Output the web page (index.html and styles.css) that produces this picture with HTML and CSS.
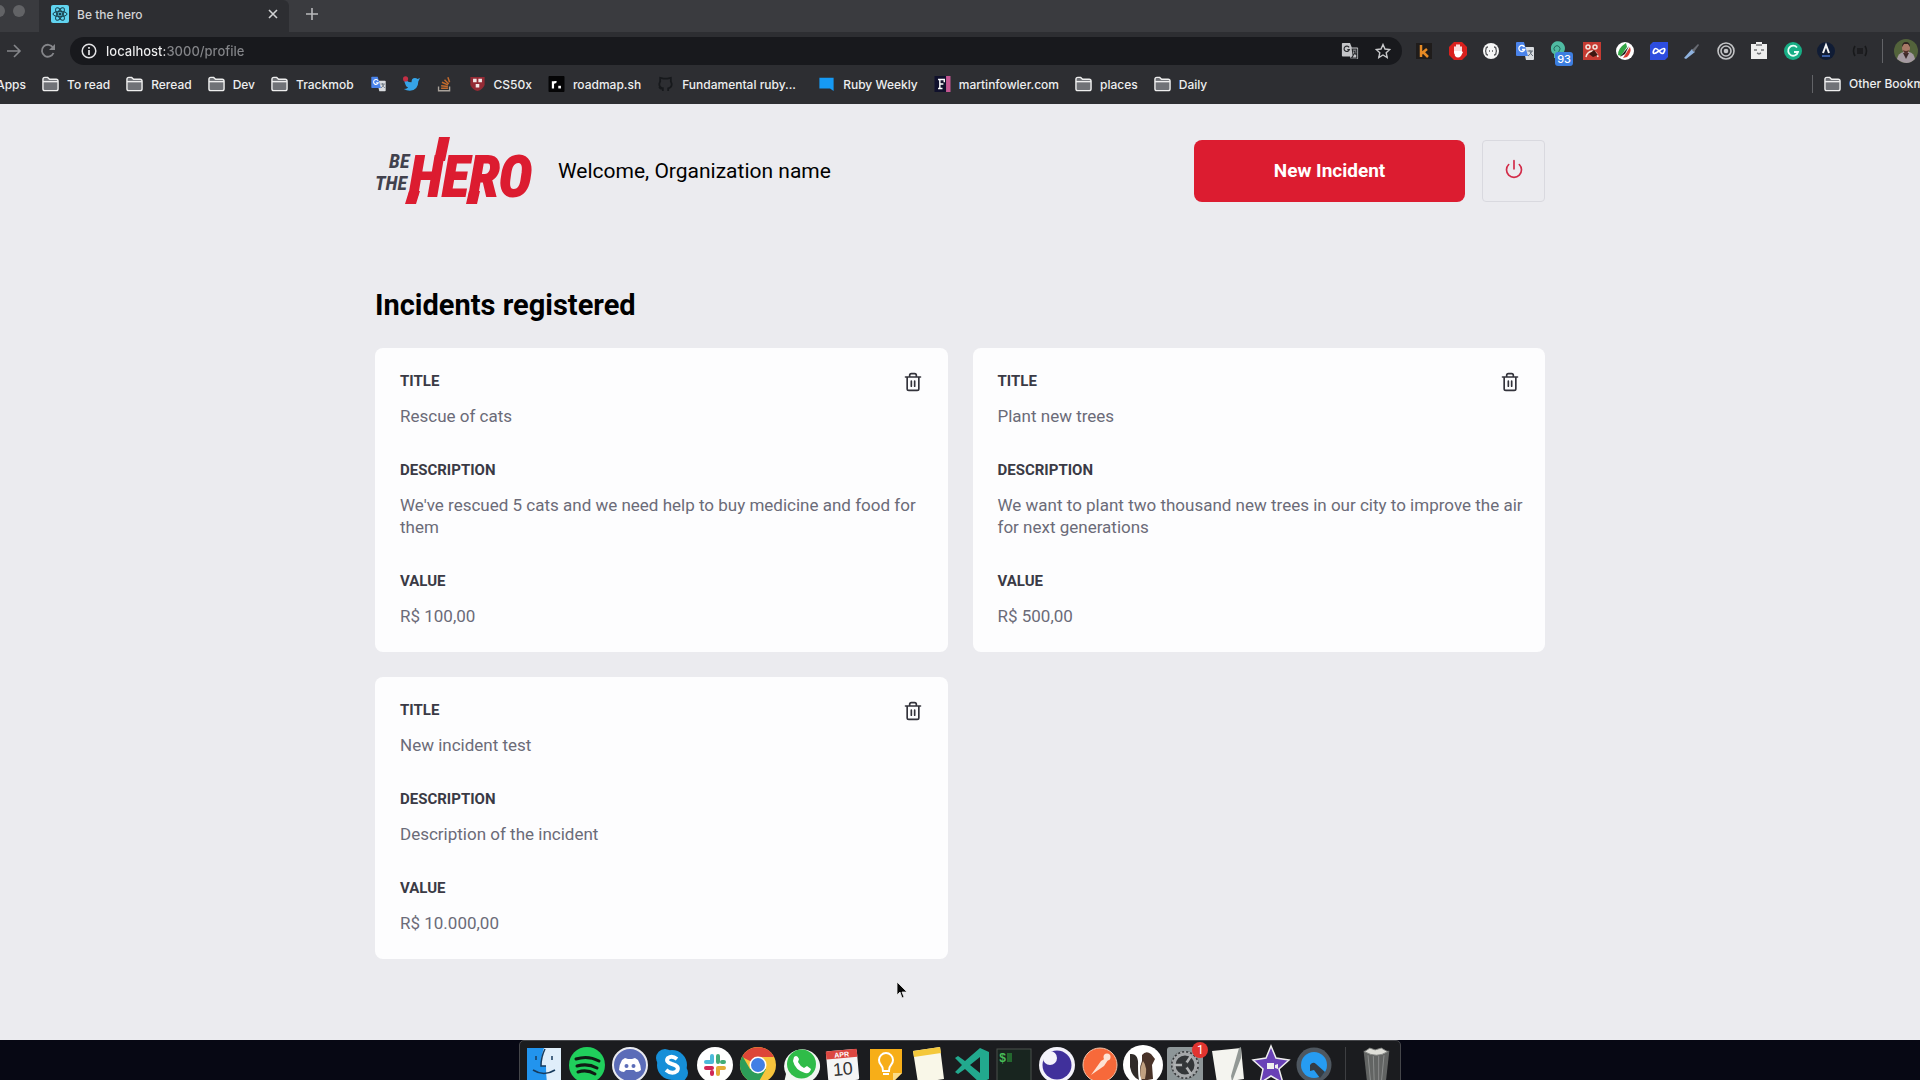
FILE: index.html
```html
<!DOCTYPE html>
<html lang="en">
<head>
<meta charset="utf-8">
<meta name="viewport" content="width=device-width, initial-scale=1">
<title>Be the hero</title>
<link rel="stylesheet" href="styles.css">
</head>
<body>
<svg class="sprite" aria-hidden="true">
  <symbol id="folder" viewBox="0 0 18 16"><path d="M1 3Q1 1 3 1H6L8 3H15Q17 3 17 5V13Q17 15 15 15H3Q1 15 1 13Z" fill="#707277" stroke="#eee" stroke-width="1.5"/><path d="M1 5.500H17" stroke="#eee" stroke-width="1.500"/></symbol>
  <symbol id="trash" viewBox="0 0 24 24"><path d="M3 6h18M19 6v14a2 2 0 0 1-2 2H7a2 2 0 0 1-2-2V6m3 0V4a2 2 0 0 1 2-2h4a2 2 0 0 1 2 2v2M10 11v6M14 11v6" fill="none" stroke="currentColor" stroke-width="2" stroke-linecap="round" stroke-linejoin="round"/></symbol>
  <symbol id="translate" viewBox="0 0 20 20"><path d="M8 6h10q1 0 1 1v11q0 1-1 1h-7z" fill="#d9dce0"/><path d="M2 1h7l4 14H2q-1 0-1-1V2q0-1 1-1z" fill="#4a83ea"/><path d="M9.500 6A3 3 0 1 0 9.700 8.500H7" fill="none" stroke="#fff" stroke-width="1.300"/><path d="M12.500 10H18M15 9v1q0 3 3 5M17 10q-1 3-4 5" fill="none" stroke="#66707c"/></symbol>
</svg>

<header class="browser">
  <div class="tabstrip">
    <div class="lights"><i></i><i></i></div>
    <div class="tab">
      <svg class="favicon" viewBox="0 0 18 18"><rect width="18" height="18" rx="2" fill="#61d4f0"/><g fill="none" stroke="#17404d"><ellipse cx="9" cy="9" rx="7" ry="2.700"/><ellipse cx="9" cy="9" rx="7" ry="2.700" transform="rotate(60 9 9)"/><ellipse cx="9" cy="9" rx="7" ry="2.700" transform="rotate(120 9 9)"/></g><circle cx="9" cy="9" r="1.500" fill="#17404d"/></svg>
      <span class="tab-title">Be the hero</span>
      <button class="plain" aria-label="Close tab"><svg width="10" height="10" viewBox="0 0 10 10"><path d="M1 1l8 8M9 1l-8 8" stroke="#d0d1d3" stroke-width="1.600"/></svg></button>
    </div>
    <button class="plain new-tab" aria-label="New tab"><svg width="14" height="14" viewBox="0 0 14 14"><path d="M7 1v12M1 7h12" stroke="#b9babc" stroke-width="1.600"/></svg></button>
  </div>
  <div class="toolbar">
    <button class="plain" aria-label="Forward"><svg width="16" height="16" viewBox="0 0 16 16"><path d="M1 8h13M8 2l6 6-6 6" fill="none" stroke="#85868a" stroke-width="1.600"/></svg></button>
    <button class="plain reload" aria-label="Reload"><svg width="16" height="16" viewBox="0 0 16 16"><path d="M13.500 10A6 6 0 1 1 13 4.500" fill="none" stroke="#85868a" stroke-width="1.800"/><path d="M15 1v6H9z" fill="#85868a"/></svg></button>
    <div class="omnibox">
      <svg width="16" height="16" viewBox="0 0 16 16"><circle cx="8" cy="8" r="6.800" fill="none" stroke="#e4e4e6" stroke-width="1.500"/><path d="M8 7v5M8 4v1.700" stroke="#e4e4e6" stroke-width="1.700"/></svg>
      <input class="address" type="text" aria-label="Address" value="localhost:3000/profile">
      <svg width="18" height="18" viewBox="0 0 20 20"><path d="M2 1h8l2 5h6q1 0 1 1v11q0 1-1 1h-7l-1-3H2q-1 0-1-1V2q0-1 1-1z" fill="#c4c5c8"/><path d="M9 6A3 3 0 1 0 9.300 8.500H7M12.500 8h5v10h-6l2-3zM13 10h4M15 10q0 3 2 4M16 11q-1 3-3 4" fill="none" stroke="#292b2e" stroke-width="1.300"/></svg>
      <svg width="16" height="16" viewBox="0 0 16 16"><path d="M8 1.500l2 4.500 4.800.5-3.600 3.200 1 4.800L8 12l-4.200 2.500 1-4.800L1.200 6.500 6 6z" fill="none" stroke="#c9cacc" stroke-width="1.400"/></svg>
    </div>
    <div class="extensions">
      <svg viewBox="0 0 20 20"><path d="M2 2h16v16H2z" fill="#1f1c1b"/><path d="M7 4v12M13 8l-6 5M9.500 11.500L14 16" stroke="#e78b25" stroke-width="2.500"/></svg>
      <svg viewBox="0 0 20 20"><path d="M6 1h8l5 5v8l-5 5H6l-5-5V6z" fill="#d9201d"/><path d="M7 6v6M9 4v7M11 4v7M13 6v6" stroke="#fff" stroke-width="1.700" stroke-linecap="round"/><path d="M6 10l1 5q3 3 6 0l2-4-2-1z" fill="#fff"/></svg>
      <svg viewBox="0 0 20 20"><circle cx="10" cy="10" r="8" fill="#f6f6f6"/><path d="M7 6q-2 0-2 2t-1 2q1 0 1 2t2 2M13 6q2 0 2 2t1 2q-1 0-1 2t-2 2M8 10h1M11 10h1" fill="none" stroke="#55565a" stroke-width="1.300"/></svg>
      <svg viewBox="0 0 20 20"><use href="#translate"/></svg>
      <span class="ext-badged"><svg viewBox="0 0 20 20"><path d="M3 8a7 7 0 1 1 12 4l-5 1v4H6v-4Q3 12 3 8z" fill="#4fbba2"/><path d="M7 10a3 3 0 1 1 4 0l-1 3" fill="none" stroke="#23695c"/></svg><b class="count">93</b></span>
      <svg viewBox="0 0 20 20"><rect x="1" y="1" width="18" height="18" fill="#c53b32"/><path d="M4 6a2 2 0 1 1 4 0 2 2 0 1 1-4 0M11 6a2 2 0 1 1 4 0 2 2 0 1 1-4 0M4 16q1-5 6-6 5 1 6 6" fill="none" stroke="#f3e5dc" stroke-width="1.500"/><path d="M7 13l5-4 4 5-5 2z" fill="#3d1711"/></svg>
      <svg viewBox="0 0 20 20"><circle cx="10" cy="10" r="9" fill="#fff"/><path d="M3 14Q3 7 11 2l1 4-6 9z" fill="#32a545"/><path d="M8 17l7-11q2 5-3 10z" fill="#d63a32"/><path d="M5 16L14 5l-4 8z" fill="#1b1b1c"/></svg>
      <svg viewBox="0 0 20 20"><path d="M4 1h15v15l-3 3H1V4z" fill="#2d4ddf"/><path d="M10 10Q6 5 4.500 10T10 10Q14 15 15.500 10T10 10" fill="none" stroke="#fff" stroke-width="1.700"/></svg>
      <svg viewBox="0 0 20 20"><path d="M2 17l8-9 3 3-9 7z" fill="#8fb2de"/><path d="M10 9l6-6 1 1-5 7z" fill="#686b72"/></svg>
      <svg viewBox="0 0 20 20"><g fill="none" stroke="#c3c4c6" stroke-width="1.600"><circle cx="10" cy="10" r="8"/><circle cx="10" cy="10" r="5"/></g><circle cx="10" cy="10" r="2.300" fill="#c3c4c6"/></svg>
      <svg viewBox="0 0 20 20"><path d="M2 3h5V1h6v2h5v15H2z" fill="#eee"/><path d="M7 4h6M5 9h3M12 9h3M8 12l2 1 2-1" fill="none" stroke="#747578" stroke-width="1.400"/></svg>
      <svg viewBox="0 0 20 20"><circle cx="10" cy="10" r="9" fill="#17ae85"/><path d="M14 6.500A5 5 0 1 0 15 11h-4" fill="none" stroke="#e9fff8" stroke-width="1.800"/></svg>
      <svg viewBox="0 0 20 20"><circle cx="10" cy="10" r="9" fill="#101c35"/><path d="M7 12l3-8 3 8" fill="none" stroke="#f5f5f5" stroke-width="2"/><path d="M6 15h8" stroke="#4772c9" stroke-width="1.500"/></svg>
      <svg viewBox="0 0 20 20"><path d="M5 5q-3 5 0 10M15 5q3 5 0 10M7 8h6M7 10h6M7 12h6" fill="none" stroke="#18191b" stroke-width="1.600"/></svg>
    </div>
    <svg class="avatar" viewBox="0 0 24 24"><circle cx="12" cy="12" r="12" fill="#53633b"/><path d="M3 20q1-6 7-7h5q5 1 6 7-8 8-18 0z" fill="#a59aa1"/><path d="M9 14l3 6 3-6z" fill="#3c2929"/><ellipse cx="12" cy="9" rx="4" ry="5" fill="#a87967"/><path d="M8 8q0-5 4-5t4 5l-2-3h-4z" fill="#302321"/><path d="M9 11q3 2 6 0l-2 4h-2z" fill="#4f302b"/></svg>
  </div>
  <nav class="bookmarks" aria-label="Bookmarks">
    <a class="apps" href="#">Apps</a>
    <a href="#"><svg><use href="#folder"/></svg>To read</a>
    <a href="#"><svg><use href="#folder"/></svg>Reread</a>
    <a href="#"><svg><use href="#folder"/></svg>Dev</a>
    <a href="#"><svg><use href="#folder"/></svg>Trackmob</a>
    <a href="#" aria-label="Translate"><svg><use href="#translate"/></svg></a>
    <a href="#" aria-label="Twitter"><svg viewBox="0 0 20 18"><path d="M2 3q4 4 8 4 0-5 4-5 2 0 3 1l3-1-2 4q0 10-10 11-4 0-7-2 3 0 5-2-3-1-3-3-2-3-1-7z" fill="#35a4e8"/><circle cx="3" cy="3" r="3" fill="#c42f45"/></svg></a>
    <a href="#" aria-label="Stack Overflow"><svg viewBox="0 0 20 18"><path d="M3 12v5h13v-5" fill="none" stroke="#a9a29b" stroke-width="1.600"/><path d="M6 14h8M6 11l8 1M7 7l7 3M10 4l5 5M14 1l2 6" stroke="#c36a2d" stroke-width="1.800"/></svg></a>
    <a href="#"><svg viewBox="0 0 18 18"><path d="M1 1h16v9q-2 5-8 7-6-2-8-7z" fill="#942b35"/><path d="M4 3h4v4H4zM10 3h4v4h-4zM7 9h4v4H7z" fill="#f2e9e9"/></svg>CS50x</a>
    <a href="#"><svg viewBox="0 0 18 18"><rect width="18" height="18" rx="1" fill="#050506"/><path d="M5 14V6M5 9q1-3 4-2" fill="none" stroke="#fff" stroke-width="2.500"/><path d="M11 11h3v3h-3z" fill="#fff"/></svg>roadmap.sh</a>
    <a class="wide" href="#"><svg viewBox="0 0 18 18"><path d="M6 17v-3q-3 1-4-2M6 14q-4-1-4-5l1-3V2l4 1h4l4-1v4l1 3q0 4-4 5v3" fill="none" stroke="#17191c" stroke-width="2"/></svg>Fundamental ruby...</a>
    <a href="#"><svg viewBox="0 0 18 18"><path d="M1 2h16v15l-4-3H1z" fill="#169af4"/></svg>Ruby Weekly</a>
    <a href="#"><svg viewBox="0 0 18 18"><path d="M0 0h13v18H0z" fill="#10112c"/><path d="M13 0h5v18h-5z" fill="#c45792"/><path d="M4 4h7v3M6 4v10M4 14h5M6 9h4" fill="none" stroke="#fff" stroke-width="1.600"/></svg>martinfowler.com</a>
    <a href="#"><svg><use href="#folder"/></svg>places</a>
    <a href="#"><svg><use href="#folder"/></svg>Daily</a>
    <a class="other" href="#"><svg><use href="#folder"/></svg>Other Bookmarks</a>
  </nav>
</header>

<main class="page">
  <div class="container">
    <header class="profile-header">
      <svg class="logo" viewBox="0 0 158 67" role="img" aria-label="Be the hero">
        <path class="slash" d="M59 24l5-24h11l-5 24zM34 54l-4 13h11l4-13zM94 54l-3 13h11l3-13z"/>
        <text class="logo-dark" x="14" y="31">BE</text>
        <text class="logo-dark" x="0" y="53">THE</text>
        <text class="logo-red" x="34" y="59">HERO</text>
      </svg>
      <p class="welcome">Welcome, Organization name</p>
      <button class="new-incident">New Incident</button>
      <button class="logout" aria-label="Log out"><svg width="20" height="20" viewBox="0 0 24 24"><path d="M18.360 6.640a9 9 0 1 1-12.730 0M12 2v10" fill="none" stroke="currentColor" stroke-width="2" stroke-linecap="round"/></svg></button>
    </header>
    <h1>Incidents registered</h1>
    <ul class="incidents">
      <li class="card">
        <button class="delete" aria-label="Delete incident"><svg><use href="#trash"/></svg></button>
        <h2>TITLE</h2><p>Rescue of cats</p>
        <h2>DESCRIPTION</h2><p>We've rescued 5 cats and we need help to buy medicine and food for them</p>
        <h2>VALUE</h2><p>R$ 100,00</p>
      </li>
      <li class="card">
        <button class="delete" aria-label="Delete incident"><svg><use href="#trash"/></svg></button>
        <h2>TITLE</h2><p>Plant new trees</p>
        <h2>DESCRIPTION</h2><p>We want to plant two thousand new trees in our city to improve the air for next generations</p>
        <h2>VALUE</h2><p>R$ 500,00</p>
      </li>
      <li class="card">
        <button class="delete" aria-label="Delete incident"><svg><use href="#trash"/></svg></button>
        <h2>TITLE</h2><p>New incident test</p>
        <h2>DESCRIPTION</h2><p>Description of the incident</p>
        <h2>VALUE</h2><p>R$ 10.000,00</p>
      </li>
    </ul>
  </div>
</main>

<footer class="desktop">
  <div class="dock">
    <div class="dock-apps">
      <svg viewBox="0 0 36 36"><rect x="1" y="1" width="34" height="34" fill="#dfeefa"/><path d="M1 1h17q-3 8-3 18h5q0 10 1 16H1z" fill="#2294ee"/><path d="M10 9v4M26 9v4M7 23q11 7 22 0M19 2q-4 8-4 17h5" fill="none" stroke="#173b5d" stroke-width="1.500"/></svg>
      <svg viewBox="0 0 36 36"><circle cx="18" cy="18" r="18" fill="#20cf5c"/><path d="M7 12q12-4 23 2M8 19q11-3 20 2M9 25q9-3 17 2" fill="none" stroke="#101b14" stroke-width="3" stroke-linecap="round"/></svg>
      <svg viewBox="0 0 36 36"><circle cx="18" cy="18" r="17" fill="#5b6cb8" stroke="#e8e9ef" stroke-width="2"/><path d="M13 11l3 1h4l3-1 3 2q3 5 3 10-2 2-5 2l-2-2h-8l-2 2q-3 0-5-2 0-5 3-10z" fill="#fff"/><circle cx="14.500" cy="19" r="2" fill="#5b6cb8"/><circle cx="21.500" cy="19" r="2" fill="#5b6cb8"/></svg>
      <svg viewBox="0 0 36 36"><circle cx="11" cy="11" r="9" fill="#168fd8"/><circle cx="25" cy="26" r="9" fill="#168fd8"/><circle cx="18" cy="18" r="15" fill="#168fd8"/><path d="M23 12q-5-4-9-1-3 4 4 6 8 2 5 7-5 4-11-1" fill="none" stroke="#fff" stroke-width="4"/></svg>
      <svg viewBox="0 0 36 36"><circle cx="18" cy="18" r="18" fill="#fff"/><g stroke-width="4" stroke-linecap="round"><path d="M15 9v6M9 15h6" stroke="#4bbada"/><path d="M21 9v6M27 15h-2" stroke="#42ad78"/><path d="M9 21h6M15 27v-2" stroke="#cf2856"/><path d="M21 21h6M21 21v6" stroke="#e3ad37"/></g></svg>
      <svg viewBox="0 0 36 36"><circle cx="18" cy="18" r="18" fill="#f7c43c"/><path d="M18 18L2 10A18 18 0 0 1 34 10H18z" fill="#dd4638"/><path d="M2.400 9A18 18 0 0 0 18 36l8-14-16 0z" fill="#2c9d58"/><circle cx="18" cy="18" r="8.500" fill="#fff"/><circle cx="18" cy="18" r="7" fill="#417fe5"/></svg>
      <svg viewBox="0 0 36 36"><path d="M1 36l2-9A18 17 0 1 1 10 34z" fill="#f1f6f1"/><circle cx="18.500" cy="17" r="14.500" fill="#2fbc48"/><path d="M11 10q3-3 5 2l-1 3q2 4 6 6l3-2 4 3q-1 5-6 4-10-3-12-12z" fill="#fff"/></svg>
      <svg viewBox="0 0 36 36"><g transform="rotate(-5 18 18)"><rect x="2" y="3" width="31" height="31" rx="2" fill="#f5f5f5"/><path d="M2 3h31v8H2z" fill="#dc4741"/><text class="cal-month" x="17.500" y="10">APR</text><text class="cal-day" x="17.500" y="28">10</text></g></svg>
      <svg viewBox="0 0 36 36"><path d="M2 2h32v24l-9 9H2z" fill="#f7ae18"/><path d="M34 26l-9 9v-9z" fill="#fbdc88"/><path d="M15 24q0-4-2-6a7 7 0 1 1 10 0q-2 2-2 6zM15 27h6" fill="none" stroke="#fff" stroke-width="2"/></svg>
      <svg viewBox="0 0 36 36"><path d="M2 4l27-4 4 32-26 4z" fill="#f9f7e8"/><path d="M2 4l27-4 1 6-27 4z" fill="#f4c83b"/></svg>
      <svg viewBox="0 0 36 36"><path d="M26 1l9 4v27l-9 4-15-14-7 5-3-2 7-7-7-7 3-2 7 5zM26 10l-10 8 10 8z" fill="#22a98e" fill-rule="evenodd"/></svg>
      <svg viewBox="0 0 36 36"><rect x="1" y="2" width="34" height="33" fill="#18251f" stroke="#4a504c"/><text class="term" x="3" y="15">$</text><path d="M11 6h5v9h-5z" fill="#23682e"/></svg>
      <svg viewBox="0 0 36 36"><circle cx="18" cy="18" r="18" fill="#f3f2fa"/><circle cx="18" cy="18" r="14.500" fill="#40309b"/><circle cx="11" cy="11" r="7" fill="#f3f2fa"/></svg>
      <svg viewBox="0 0 36 36"><circle cx="18" cy="18" r="17" fill="#f7693a" stroke="#f4c2a8"/><path d="M9 28l10-14 5-3 2 2-4 6z" fill="#fde3d3"/><circle cx="25" cy="10" r="3.500" fill="#fde3d3"/></svg>
      <svg viewBox="0 0 36 36"><circle cx="18" cy="18" r="20" fill="#fff"/><path d="M5 7q9-1 8 12 0 9 1 14-7-3-9-13z" fill="#302b29"/><path d="M17 8q4-5 9-1l4 5-3 6 1 14-11 2q-4-11 0-20z" fill="#493329"/><path d="M18 14q5 6 2 18h-4q-2-10 2-18z" fill="#c0a081"/></svg>
      <span class="badged"><svg viewBox="0 0 36 36"><rect width="36" height="36" rx="3" fill="#8d9698"/><circle cx="18" cy="18" r="14" fill="#333638"/><circle cx="18" cy="18" r="11" fill="none" stroke="#a5a8aa" stroke-width="3"/><circle cx="18" cy="18" r="13" fill="none" stroke="#a5a8aa" stroke-width="2" stroke-dasharray="2 2"/><path d="M18 18H7M18 18l6-9M18 18l6 9" stroke="#b2b4b5" stroke-width="2.500"/><circle cx="18" cy="18" r="3" fill="#333638"/></svg><b class="alert">1</b></span>
      <svg viewBox="0 0 36 36"><path d="M2 4l29-3 3 31-27 4z" fill="#f4f4ef"/><path d="M31 0l-2 1-8 28 1 6 9-24z" fill="#929895"/></svg>
      <svg viewBox="0 0 36 36"><path d="M18-1l5 12 13 2-10 9 4 14-12-7-11 7 3-14-10-9 13-2z" fill="#6941b7" stroke="#eee" stroke-width="1.500"/><path d="M14 16h7v6h-7zM22 18l3-1v5l-3-1z" fill="#eee"/></svg>
      <svg viewBox="0 0 36 36"><circle cx="18" cy="18" r="17.500" fill="#4e5760"/><circle cx="18" cy="18" r="13" fill="#269cf2"/><path d="M14 18q3-4 6-1l9 8-5 6-6-8-4 1z" fill="#353c43"/></svg>
    </div>
    <svg class="bin" viewBox="0 0 36 40"><path d="M4 4h29l-4 36H8z" fill="#626463"/><path d="M9 9l3 31M15 10l1 30M21 10v30M27 9l-3 31" stroke="#8f9190"/><path d="M5 5l6-4 6 2 7-2 7 4q-12 8-26 0z" fill="#deded8" stroke="#80827f"/></svg>
  </div>
</footer>
<svg class="cursor" viewBox="0 0 12 18" aria-hidden="true"><path d="M1 1v13l3-3 2 6 2-1-2-5h5z" fill="#050505" stroke="#eee" stroke-width=".8"/></svg>
</body>
</html>
```
FILE: styles.css
```css
* { box-sizing: border-box; margin: 0; padding: 0; }
body { min-height: 100vh; display: flex; flex-direction: column; overflow-x: hidden; background: #ebebef; font-family: Roboto, "Liberation Sans", sans-serif; }
button { border: 0; background: none; font: inherit; cursor: pointer; }
a { color: inherit; text-decoration: none; }
.sprite { display: none; }

/* Browser window */
.browser { height: 104px; background: #2d2e32; color: #eeeeef; font-family: Inter, "Liberation Sans", sans-serif; font-size: 12px; font-weight: 500; }
.plain { display: flex; align-items: center; justify-content: center; flex: none; }
.tabstrip { height: 32px; display: flex; background: #3a3b3f; }
.lights { width: 39px; display: flex; flex: none; gap: 8px; align-items: center; padding-bottom: 10px; justify-content: flex-end; padding-right: 14px; }
.lights i { flex: none; width: 12px; height: 12px; border-radius: 50%; background: #626366; }
.tab { width: 250px; display: flex; align-items: center; padding: 0 11px 4px 12px; background: #2d2e32; border-radius: 0 6px 0 0; }
.favicon { width: 18px; height: 18px; margin-right: 8px; }
.tab-title { flex: 1; color: #d2d3d5; }
.new-tab { margin-left: 16px; padding-bottom: 4px; }
.toolbar { height: 38px; display: flex; align-items: center; padding: 0 2px 0 6px; }
.reload { margin: 0 14px 0 18px; }
.omnibox { flex: 1; height: 28px; display: flex; align-items: center; gap: 16px; border-radius: 14px; background: #18191d; padding: 0 11px; }
.address { flex: 1; min-width: 0; margin-left: -7px; border: 0; outline: 0; font: 500 13px Inter, "Liberation Sans", sans-serif; color: transparent; background: linear-gradient(90deg, #f0f0f1 59px, #85868a 59px); -webkit-background-clip: text; background-clip: text; }
.extensions { width: 456px; margin-left: 12px; display: flex; justify-content: space-between; }
.extensions svg { display: block; width: 20px; height: 20px; }
.ext-badged, .badged { position: relative; }
.count { position: absolute; left: 7px; top: 11px; padding: 0 2px; border-radius: 3px; background: #3c7ee0; color: #fff; font-size: 11px; line-height: 14px; font-weight: 500; }
.avatar { box-sizing: content-box; width: 24px; height: 24px; flex: none; margin-left: 12px; padding-left: 11px; border-left: 1px solid #626367; }
.bookmarks { height: 28px; display: flex; align-items: center; gap: 16px; white-space: nowrap; overflow: hidden; }
.bookmarks a { display: flex; align-items: center; gap: 8px; flex: none; }
.bookmarks svg { flex: none; width: 17px; height: 16px; }
.bookmarks .apps { width: 26px; justify-content: flex-end; }
.bookmarks .wide { width: 145px; }
.bookmarks .other { width: 108px; margin-left: auto; border-left: 1px solid #626367; padding-left: 11px; line-height: 18px; }

/* Profile page */
.page { flex: 1; padding: 33px 24px; }
.container { max-width: 1170px; margin: 0 auto; }
.profile-header { display: flex; align-items: center; }
.logo { width: 158px; height: 67px; overflow: visible; }
.logo text { font-family: "Liberation Sans Narrow", "Roboto Condensed", "Liberation Sans", sans-serif; font-weight: 700; font-style: italic; }
.logo .logo-dark { font-size: 20px; fill: #41414d; }
.logo .logo-red { font-size: 56px; fill: #dc1c30; stroke: #dc1c30; stroke-width: 2px; }
.slash { fill: #dc1c30; }
.welcome { margin-left: 25px; font-size: 21px; }
.new-incident { width: 271px; height: 62px; margin-left: auto; border-radius: 8px; background: #dc1c30; color: #fff; font-size: 19px; font-weight: 700; }
.logout { width: 63px; height: 62px; margin-left: 17px; border: 1px solid #d9d9df; border-radius: 4px; color: #d22b48; }
h1 { margin: 85px 0 26px; font-size: 29px; line-height: 33px; }
.incidents { display: grid; grid-template-columns: 1fr 1fr; gap: 25px; align-items: start; list-style: none; }
.card { position: relative; padding: 25px 20px 25px 25px; border-radius: 8px; background: #fdfdfe; }
.card h2 { margin-bottom: 16px; color: #3a3a45; font-size: 15px; line-height: 16px; }
.card p { margin-bottom: 35px; color: #6b6b78; font-size: 17px; line-height: 22px; }
.card p:last-child { margin-bottom: 0; }
.delete { position: absolute; right: 25px; top: 24px; color: #33333b; }
.delete svg { display: block; width: 20px; height: 20px; }

/* Desktop dock */
.desktop { height: 40px; display: flex; justify-content: center; align-items: flex-start; overflow: hidden; background: #070814; }
.dock { width: 882px; height: 50px; flex: none; display: flex; padding: 6px 7px 0 6px; border: 1px solid #45464a; border-radius: 5px 5px 0 0; background: #1b1c1f; }
.dock-apps { width: 820px; display: flex; justify-content: space-between; padding-right: 13px; border-right: 1px solid #3e3f42; }
.dock svg { display: block; width: 36px; height: 36px; overflow: visible; }
.dock .bin { width: 32px; margin-left: 14px; }
.cal-month { font: 700 7px "Liberation Sans", sans-serif; fill: #fff; text-anchor: middle; }
.cal-day { font: 18px "Liberation Sans", sans-serif; fill: #333; text-anchor: middle; }
.term { font: 700 12px "Liberation Mono", monospace; fill: #48bd58; }
.alert { position: absolute; right: -5px; top: -5px; width: 16px; height: 16px; border-radius: 50%; background: #e1342f; color: #fff; font-size: 12px; line-height: 16px; font-weight: 400; text-align: center; }

/* Pointer over the page */
.cursor { position: fixed; left: 896px; top: 981px; width: 12px; height: 18px; pointer-events: none; }
```
